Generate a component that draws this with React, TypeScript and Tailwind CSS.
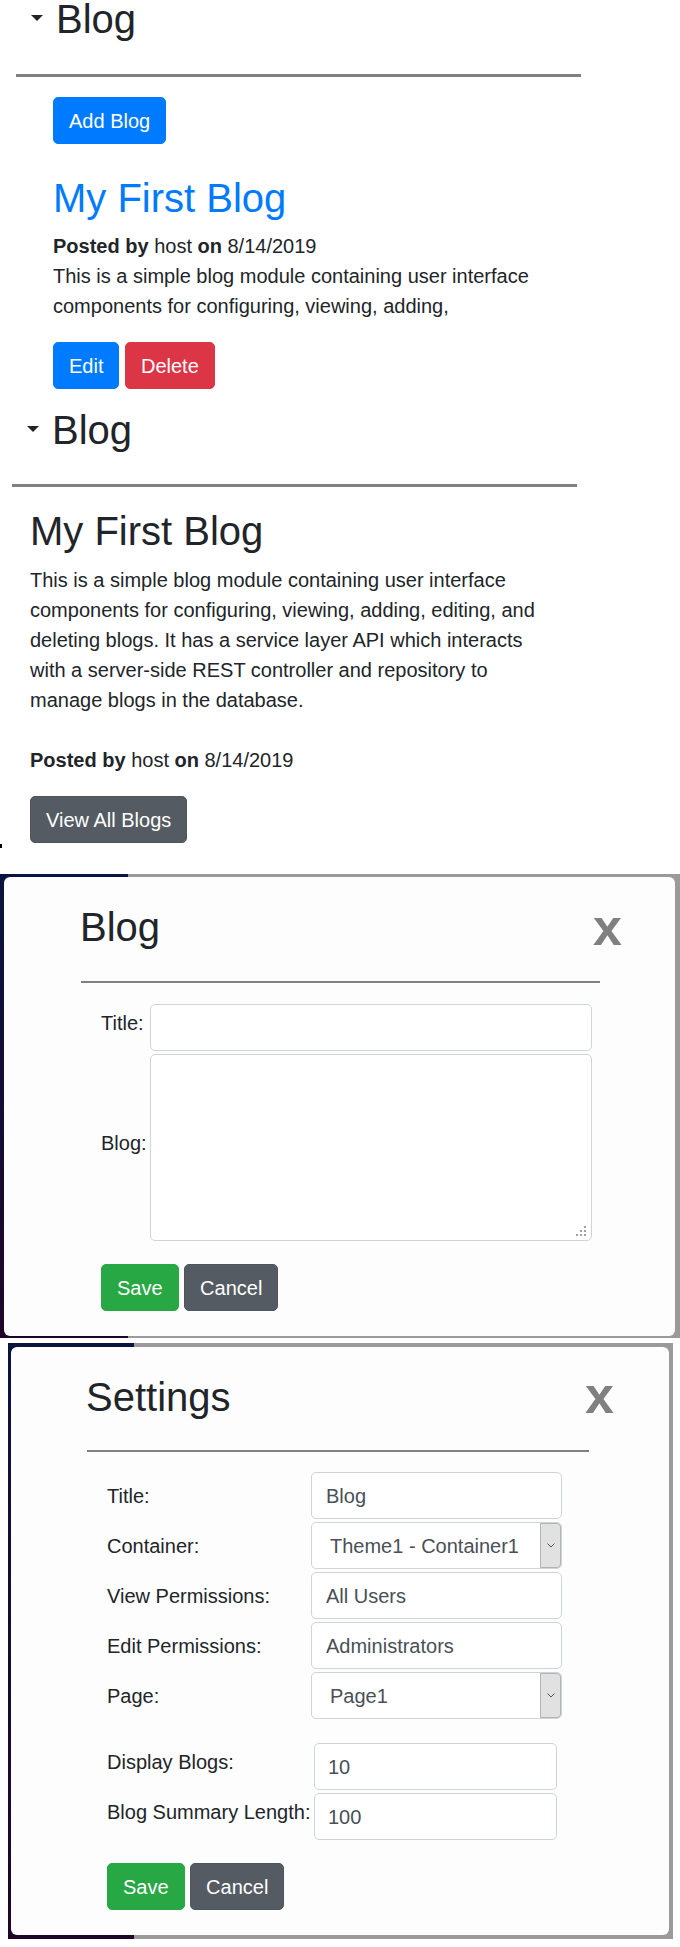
import React from "react";

const Caret = () => (
  <svg width="12" height="6" viewBox="0 0 12 6" className="block">
    <path d="M0 0H12L6 6Z" fill="#212529" />
  </svg>
);

function Btn({ cls, children }: { cls: string; children: React.ReactNode }) {
  return (
    <span
      className={`inline-block px-[15px] py-[7.5px] border rounded-[5px] text-white text-[20px] leading-[30px] ${cls}`}
    >
      {children}
    </span>
  );
}

const PRIMARY = "bg-[#007bff] border-[#007bff]";
const DANGER = "bg-[#dc3545] border-[#dc3545]";
const SUCCESS = "bg-[#28a745] border-[#28a745]";
const SECONDARY = "bg-[#545b62] border-[#4e555b]";

function Chevron() {
  return (
    <svg width="8" height="5" viewBox="0 0 8 5" className="block">
      <path d="M0.5 0.5L4 4L7.5 0.5" fill="none" stroke="#555" strokeWidth="1" />
    </svg>
  );
}

function TextBox({ w, pl, children }: { w: string; pl: string; children?: React.ReactNode }) {
  return (
    <div
      className={`${w} ${pl} h-[47px] flex items-center border border-[#ced4da] rounded-[5px] bg-white text-[#495057]`}
    >
      {children}
    </div>
  );
}

function SelectBox({ children }: { children: React.ReactNode }) {
  return (
    <div className="relative w-[251px] h-[47px] flex items-center pl-[18px] border border-[#ced4da] rounded-[5px] bg-white text-[#495057]">
      {children}
      <div className="absolute right-0 top-0 bottom-0 w-[21px] bg-[#e1e1e1] border border-[#b3b3b3] rounded-r-[4px] flex items-center justify-center">
        <Chevron />
      </div>
    </div>
  );
}

function Grip() {
  return (
    <svg width="11" height="11" viewBox="0 0 11 11" className="absolute right-[4px] bottom-[3px]">
      <g fill="#a0a0a0">
        <rect x="8" y="0" width="2" height="2" />
        <rect x="4" y="4" width="2" height="2" />
        <rect x="8" y="4" width="2" height="2" />
        <rect x="0" y="8" width="2" height="2" />
        <rect x="4" y="8" width="2" height="2" />
        <rect x="8" y="8" width="2" height="2" />
      </g>
    </svg>
  );
}

export default function App() {
  return (
    <div className="w-[680px] bg-white text-[#212529] font-['Liberation_Sans',Arial,sans-serif] text-[20px] leading-[30px]">
      {/* Section 1: blog list */}
      <div className="ml-[16px] w-[565px]">
        <div className="flex items-start pl-[15px]">
          <div className="mt-[15px]">
            <Caret />
          </div>
          <h2 className="ml-[13px] text-[40px] leading-[38px]">Blog</h2>
        </div>
        <div className="mt-[36px] h-[3px] bg-[#808080]" />
        <div className="ml-[37px]">
          <div className="mt-[20px] flex">
            <Btn cls={PRIMARY}>Add Blog</Btn>
          </div>
          <div className="mt-[30px] text-[40px] leading-[48px] text-[#007bff]">My First Blog</div>
          <div className="mt-[9px]">
            <b>Posted by</b> host <b>on</b> 8/14/2019
          </div>
          <div className="w-[520px]">
            This is a simple blog module containing user interface components for configuring, viewing, adding,
          </div>
          <div className="mt-[21px] flex gap-[5.5px]">
            <Btn cls={PRIMARY}>Edit</Btn>
            <Btn cls={DANGER}>Delete</Btn>
          </div>
        </div>
      </div>

      {/* Section 2: blog view */}
      <div className="mt-[22px] ml-[12px] w-[565px]">
        <div className="flex items-start pl-[15px]">
          <div className="mt-[15px]">
            <Caret />
          </div>
          <h2 className="ml-[13px] text-[40px] leading-[38px]">Blog</h2>
        </div>
        <div className="mt-[35px] h-[3px] bg-[#808080]" />
        <div className="ml-[18px]">
          <div className="mt-[20px] text-[40px] leading-[48px]">My First Blog</div>
          <p className="mt-[10px] w-[520px]">
            This is a simple blog module containing user interface components for configuring, viewing, adding,
            editing, and deleting blogs. It has a service layer API which interacts with a server-side REST
            controller and repository to manage blogs in the database.
          </p>
          <div className="mt-[30px]">
            <b>Posted by</b> host <b>on</b> 8/14/2019
          </div>
          <div className="mt-[21px] flex">
            <Btn cls={SECONDARY}>View All Blogs</Btn>
          </div>
        </div>
      </div>
      <div className="mt-[1px] w-[2px] h-[4px] bg-black" />

      {/* Modal 1: Blog editor */}
      <div className="mt-[26px] pt-[3px] pb-[2px] pl-[4px] pr-[5px] bg-[image:linear-gradient(to_right,transparent_128px,#9a9a9a_128px),linear-gradient(to_bottom,#0a1440,#1e0629)]">
        <div className="rounded-[6px] bg-[#fdfdfd] pt-[26px] pb-[25px]">
          <div className="flex items-start justify-between">
            <div className="ml-[76px] text-[40px] leading-[48px]">Blog</div>
            <div className="mr-[53px] text-[52px] leading-[48px] font-bold text-[#808080]">x</div>
          </div>
          <div className="ml-[77px] mt-[30px] w-[519px] h-[2px] bg-[#808080]" />
          <div className="mt-[21px] ml-[97px] flex flex-col gap-[3px]">
            <div className="flex items-center">
              <div className="w-[49px] pb-[9px]">Title:</div>
              <TextBox w="w-[442px]" pl="pl-[14px]" />
            </div>
            <div className="flex items-center">
              <div className="w-[49px] pb-[9px]">Blog:</div>
              <div className="relative w-[442px] h-[187px] border border-[#ced4da] rounded-[5px] bg-white">
                <Grip />
              </div>
            </div>
          </div>
          <div className="mt-[23px] ml-[97px] flex gap-[5.5px]">
            <Btn cls={SUCCESS}>Save</Btn>
            <Btn cls={SECONDARY}>Cancel</Btn>
          </div>
        </div>
      </div>

      {/* Modal 2: Settings */}
      <div className="mt-[5px] ml-[8px] w-[665px] pt-[4px] pb-[4px] pl-[3px] pr-[4px] bg-[image:linear-gradient(to_right,transparent_126px,#9a9a9a_126px),linear-gradient(to_bottom,#0a1440,#1e0629)]">
        <div className="rounded-[6px] bg-[#fdfdfd] pt-[26px] pb-[25px]">
          <div className="flex items-start justify-between">
            <div className="ml-[75px] text-[40px] leading-[48px]">Settings</div>
            <div className="mt-[-2px] mr-[55px] text-[52px] leading-[48px] font-bold text-[#808080]">x</div>
          </div>
          <div className="ml-[76px] mt-[29px] w-[502px] h-[2px] bg-[#808080]" />
          <div className="mt-[20px] ml-[96px] flex flex-col gap-[3px]">
            <div className="flex items-center">
              <div className="w-[204px]">Title:</div>
              <TextBox w="w-[251px]" pl="pl-[14px]">Blog</TextBox>
            </div>
            <div className="flex items-center">
              <div className="w-[204px]">Container:</div>
              <SelectBox>Theme1 - Container1</SelectBox>
            </div>
            <div className="flex items-center">
              <div className="w-[204px]">View Permissions:</div>
              <TextBox w="w-[251px]" pl="pl-[14px]">All Users</TextBox>
            </div>
            <div className="flex items-center">
              <div className="w-[204px]">Edit Permissions:</div>
              <TextBox w="w-[251px]" pl="pl-[14px]">Administrators</TextBox>
            </div>
            <div className="flex items-center">
              <div className="w-[204px]">Page:</div>
              <SelectBox>Page1</SelectBox>
            </div>
          </div>
          <div className="mt-[24px] ml-[96px] flex flex-col gap-[3px]">
            <div className="flex items-center">
              <div className="w-[207px] pb-[10px]">Display Blogs:</div>
              <TextBox w="w-[243px]" pl="pl-[13px]">10</TextBox>
            </div>
            <div className="flex items-center">
              <div className="w-[207px] pb-[10px] whitespace-nowrap">Blog Summary Length:</div>
              <TextBox w="w-[243px]" pl="pl-[13px]">100</TextBox>
            </div>
          </div>
          <div className="mt-[23px] ml-[96px] flex gap-[5.5px]">
            <Btn cls={SUCCESS}>Save</Btn>
            <Btn cls={SECONDARY}>Cancel</Btn>
          </div>
        </div>
      </div>
    </div>
  );
}
